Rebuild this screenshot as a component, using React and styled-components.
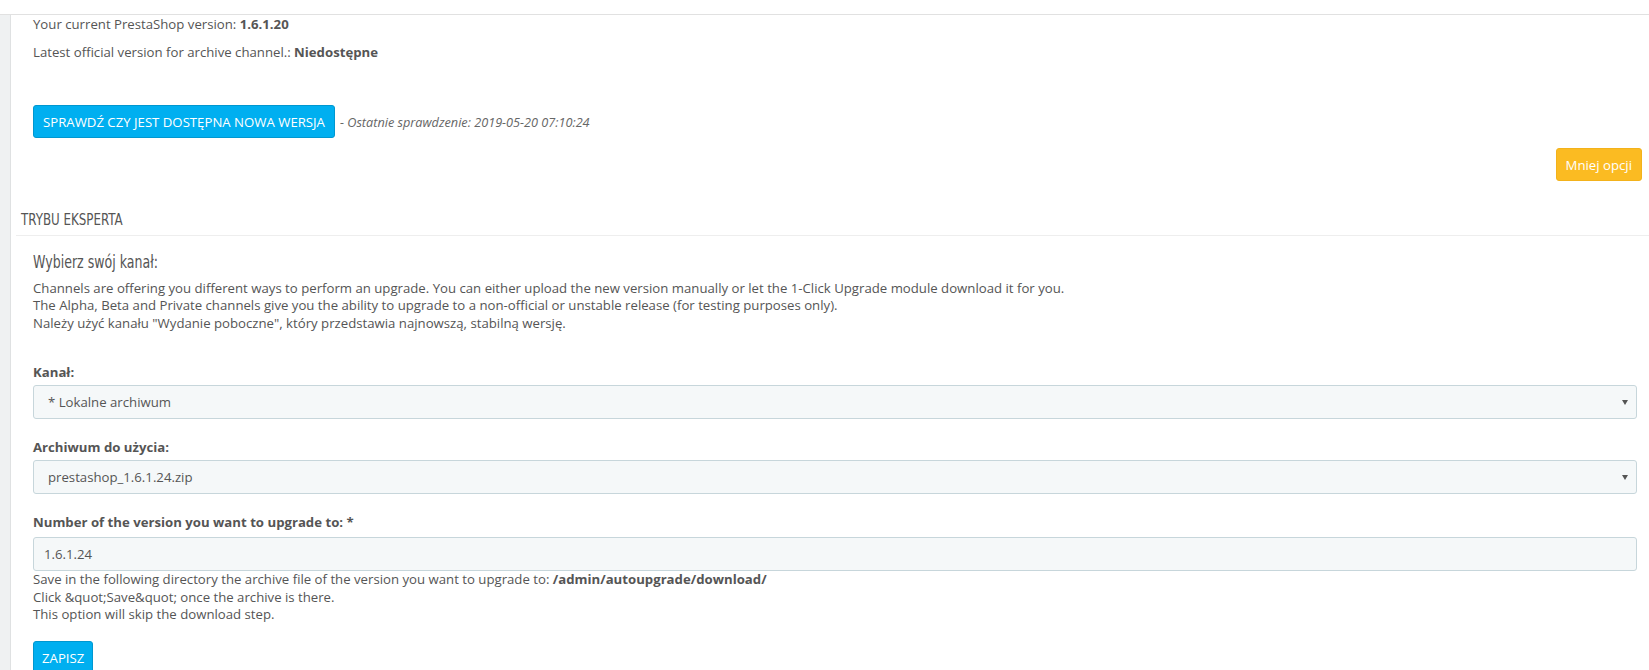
import React from "react";
import styled, { createGlobalStyle } from "styled-components";

const Global = createGlobalStyle`
  html, body { margin: 0; padding: 0; background: #fff; }
  body {
    font-family: "Open Sans", "Liberation Sans", sans-serif;
    font-size: 13.2px;
    color: #555;
  }
  * { box-sizing: border-box; }
`;

const TopBar = styled.div`
  height: 15px;
  border-bottom: 1px solid #e1e1e1;
`;

const Layout = styled.div`
  display: flex;
  min-height: 655px;
`;

const Sidebar = styled.div`
  width: 11px;
  flex: 0 0 11px;
  background: #eff1f2;
  border-right: 1px solid #dfe1e2;
`;

const Main = styled.div`
  flex: 1;
  display: flex;
  flex-direction: column;
  padding-right: 7px;
`;

const InfoBlock = styled.div`
  padding-left: 22px;
`;

const InfoLine = styled.p`
  margin: 0 0 10px;
  line-height: 18px;
`;

const CheckRow = styled.div`
  display: flex;
  align-items: center;
  gap: 5px;
  margin-top: 44px;
`;

const Button = styled.button`
  font-family: "Open Sans", "Liberation Sans", sans-serif;
  font-size: 13.2px;
  color: #fff;
  border-radius: 3px;
  border: 1px solid ${(p) => (p.$variant === "warning" ? "#f3b21b" : "#0097d0")};
  background: ${(p) => (p.$variant === "warning" ? "#fbbb22" : "#00aff0")};
  height: 33px;
  padding: 0 ${(p) => (p.$px ? p.$px : 8)}px;
  text-transform: ${(p) => (p.$upper ? "uppercase" : "none")};
  cursor: pointer;
  white-space: nowrap;
`;

const LastCheck = styled.span`
  font-style: italic;
  font-size: 12.7px;
  color: #666;
`;

const OptionsRow = styled.div`
  display: flex;
  justify-content: flex-end;
  margin-top: 10px;
`;

const Panel = styled.div`
  margin-top: 22px;
  margin-left: 5px;
  margin-right: -7px;
`;

const CondensedText = styled.span`
  display: inline-block;
  font-family: "DejaVu Sans Condensed", "Liberation Sans Narrow", sans-serif;
  transform: scaleX(0.8);
  transform-origin: left center;
  white-space: nowrap;
`;

const PanelHeading = styled.div`
  font-size: 16.5px;
  text-transform: uppercase;
  color: #555;
  height: 33px;
  line-height: 32px;
  padding-left: 5px;
  border-bottom: 1px solid #eeeeee;
`;

const PanelBody = styled.div`
  padding: 14px 12px 0 17px;
`;

const SubTitle = styled.h4`
  margin: 0;
  font-weight: normal;
  font-size: 17.5px;
  line-height: 22px;
  color: #555;
`;

const Description = styled.div`
  margin-top: 7px;
  line-height: 17.4px;
`;

const Field = styled.div`
  margin-top: ${(p) => p.$mt}px;
`;

const Label = styled.label`
  display: block;
  font-weight: bold;
  line-height: 18px;
  margin-bottom: ${(p) => (p.$mb ? p.$mb : 4)}px;
`;

const SelectBox = styled.div`
  position: relative;
  height: 34px;
  background: #f5f8f9;
  border: 1px solid #c7d6db;
  border-radius: 3px;
  display: flex;
  align-items: center;
  padding-left: ${(p) => (p.$pl ? p.$pl : 14)}px;
  color: #555;
`;

const Arrow = styled.span`
  position: absolute;
  right: 8px;
  top: 50%;
  margin-top: -2px;
  width: 0;
  height: 0;
  border-left: 3.5px solid transparent;
  border-right: 3.5px solid transparent;
  border-top: 5px solid #555;
`;

const Help = styled.div`
  line-height: 17.4px;
  margin-top: 0;
`;

const SaveRow = styled.div`
  margin-top: 18px;
`;

export default function App() {
  return (
    <>
      <Global />
      <TopBar />
      <Layout>
        <Sidebar />
        <Main>
          <InfoBlock>
            <InfoLine>
              Your current PrestaShop version: <b>1.6.1.20</b>
            </InfoLine>
            <InfoLine>
              Latest official version for archive channel.: <b>Niedostępne</b>
            </InfoLine>
            <CheckRow>
              <Button $upper $px={9}>Sprawdź czy jest dostępna nowa wersja</Button>
              <LastCheck>- Ostatnie sprawdzenie: 2019-05-20 07:10:24</LastCheck>
            </CheckRow>
          </InfoBlock>
          <OptionsRow>
            <Button $variant="warning" $px={9}>Mniej opcji</Button>
          </OptionsRow>
          <Panel>
            <PanelHeading>
              <CondensedText>Trybu eksperta</CondensedText>
            </PanelHeading>
            <PanelBody>
              <SubTitle>
                <CondensedText>Wybierz swój kanał:</CondensedText>
              </SubTitle>
              <Description>
                Channels are offering you different ways to perform an upgrade. You can either upload the new version manually or let the 1-Click Upgrade module download it for you.
                <br />
                The Alpha, Beta and Private channels give you the ability to upgrade to a non-official or unstable release (for testing purposes only).
                <br />
                Należy użyć kanału "Wydanie poboczne", który przedstawia najnowszą, stabilną wersję.
              </Description>
              <Field $mt={31}>
                <Label>Kanał:</Label>
                <SelectBox>
                  * Lokalne archiwum
                  <Arrow />
                </SelectBox>
              </Field>
              <Field $mt={19}>
                <Label>Archiwum do użycia:</Label>
                <SelectBox>
                  prestashop_1.6.1.24.zip
                  <Arrow />
                </SelectBox>
              </Field>
              <Field $mt={19}>
                <Label $mb={6}>Number of the version you want to upgrade to: *</Label>
                <SelectBox $pl={10}>1.6.1.24</SelectBox>
                <Help>
                  Save in the following directory the archive file of the version you want to upgrade to: <b>/admin/autoupgrade/download/</b>
                  <br />
                  Click &amp;quot;Save&amp;quot; once the archive is there.
                  <br />
                  This option will skip the download step.
                </Help>
              </Field>
              <SaveRow>
                <Button $upper $px={8}>Zapisz</Button>
              </SaveRow>
            </PanelBody>
          </Panel>
        </Main>
      </Layout>
    </>
  );
}
